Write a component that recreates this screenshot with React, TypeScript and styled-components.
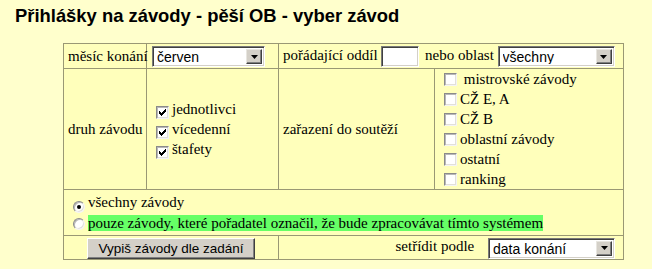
import styled, { createGlobalStyle } from 'styled-components';

const GlobalStyle = createGlobalStyle`
  body {
    margin: 0;
    background: #ffffcc;
  }
`;

const Page = styled.div`
  padding: 5px 0 0 15px;
`;

const Title = styled.h1`
  margin: 0 0 17px;
  font-family: 'Liberation Sans', Arial, sans-serif;
  font-size: 18.4px;
  font-weight: bold;
  line-height: 21px;
  color: #000;
`;

const FormTable = styled.table`
  margin-left: 48px;
  width: 560px;
  table-layout: fixed;
  border-collapse: collapse;
  background: #ffffbb;
`;

const Col = styled.col<{ $w: number }>`
  width: ${(p) => p.$w}px;
`;

const Row = styled.tr<{ $h: number }>`
  height: ${(p) => p.$h}px;
`;

const Cell = styled.td<{ $align?: 'left' | 'center' | 'right'; $pad?: string }>`
  border: 1px solid #9a9874;
  padding: ${(p) => p.$pad || '0 4px'};
  font-family: 'Liberation Serif', 'Times New Roman', serif;
  font-size: 15px;
  line-height: 20px;
  color: #000;
  text-align: ${(p) => p.$align || 'left'};
  vertical-align: middle;
  white-space: nowrap;
`;

const Line = styled.div`
  line-height: 20px;
`;

const Box = styled.span<{ $round?: boolean }>`
  display: inline-flex;
  align-items: center;
  justify-content: center;
  box-sizing: border-box;
  width: ${(p) => (p.$round ? 12 : 13)}px;
  height: ${(p) => (p.$round ? 12 : 13)}px;
  margin: 0 3px 0 5px;
  vertical-align: -2px;
  background: #fff;
  border: 1px solid;
  border-color: #8a8a8a #f4f4f4 #f4f4f4 #8a8a8a;
  border-radius: ${(p) => (p.$round ? '50%' : '0')};
  box-shadow: inset 1px 1px #b8b8b8, inset -1px -1px #e2e0da;
`;

const Dot = styled.span`
  width: 4px;
  height: 4px;
  border-radius: 50%;
  background: #000;
`;

const Marked = styled.span`
  background: #66ff66;
`;

const SelectWrap = styled.span<{ $w: number; $gap: number }>`
  display: inline-flex;
  box-sizing: border-box;
  width: ${(p) => p.$w}px;
  height: 21px;
  margin-left: ${(p) => p.$gap}px;
  vertical-align: middle;
  background: #fff;
  border: 1px solid;
  border-color: #7a7a7a #ffffff #ffffff #7a7a7a;
  box-shadow: inset 1px 1px #404040, inset -1px -1px #d4d0c8;
  padding: 2px;
`;

const Select = styled.select`
  appearance: none;
  flex: 1;
  min-width: 0;
  border: none;
  outline: none;
  background: transparent;
  padding: 0 2px;
  margin: 0;
  font-family: 'Liberation Sans', Arial, sans-serif;
  font-size: 14px;
  color: #000;
`;

const ArrowBtn = styled.span`
  display: flex;
  align-items: center;
  justify-content: center;
  box-sizing: border-box;
  width: 16px;
  background: #d4d0c8;
  border: 1px solid;
  border-color: #e8e6e0 #404040 #404040 #e8e6e0;
  box-shadow: inset -1px -1px #808080;
`;

const TextInput = styled.input`
  box-sizing: border-box;
  width: 38px;
  height: 21px;
  margin: 0 2px 0 0;
  padding: 0 2px;
  vertical-align: middle;
  background: #fff;
  border: 1px solid;
  border-color: #7a7a7a #ffffff #ffffff #7a7a7a;
  box-shadow: inset 1px 1px #404040, inset -1px -1px #d4d0c8;
  font-family: 'Liberation Sans', Arial, sans-serif;
  font-size: 14px;
`;

const Button = styled.button`
  box-sizing: border-box;
  width: 168px;
  height: 21px;
  padding: 0;
  vertical-align: middle;
  background: #d4d0c8;
  border: 1px solid;
  border-color: #ffffff #404040 #404040 #ffffff;
  box-shadow: inset -1px -1px #808080;
  font-family: 'Liberation Sans', Arial, sans-serif;
  font-size: 13.5px;
  color: #000;
`;

const Check = ({ on }: { on?: boolean }) => (
  <Box>
    {on && (
      <svg width="7" height="7" viewBox="0 0 7 7">
        <path
          fill="#000"
          d="M6 0h1v1h-1z M5 1h2v1h-2z M0 2h1v1h-1z M4 2h3v1h-3z M0 3h2v1h-2z M3 3h3v1h-3z M0 4h5v1h-5z M1 5h3v1h-3z M2 6h1v1h-1z"
        />
      </svg>
    )}
  </Box>
);

const Radio = ({ on }: { on?: boolean }) => <Box $round>{on && <Dot />}</Box>;

const Dropdown = ({ w, gap = 4, options }: { w: number; gap?: number; options: string[] }) => (
  <SelectWrap $w={w} $gap={gap}>
    <Select defaultValue={options[0]}>
      {options.map((o) => (
        <option key={o}>{o}</option>
      ))}
    </Select>
    <ArrowBtn>
      <svg width="7" height="4" viewBox="0 0 7 4">
        <path fill="#000" d="M0 0h7L3.5 4z" />
      </svg>
    </ArrowBtn>
  </SelectWrap>
);

const kinds = ['jednotlivci', 'vícedenní', 'štafety'];
const ranks = [' mistrovské závody', 'CŽ E, A', 'CŽ B', 'oblastní závody', 'ostatní', 'ranking'];

export default function App() {
  return (
    <>
      <GlobalStyle />
      <Page>
        <Title>Přihlášky na závody - pěší OB - vyber závod</Title>
        <FormTable>
          <colgroup>
            <Col $w={83} />
            <Col $w={132} />
            <Col $w={156} />
            <Col $w={189} />
          </colgroup>
          <tbody>
            <Row $h={25}>
              <Cell>měsíc konání</Cell>
              <Cell $pad="0 4px 0 1px">
                <Dropdown w={113} options={['červen']} />
              </Cell>
              <Cell colSpan={2}>
                pořádající oddíl <TextInput type="text" /> nebo oblast{' '}
                <Dropdown w={117} gap={0} options={['všechny']} />
              </Cell>
            </Row>
            <Row $h={121}>
              <Cell>druh závodu</Cell>
              <Cell>
                {kinds.map((k) => (
                  <Line key={k}>
                    <Check on />
                    {k}
                  </Line>
                ))}
              </Cell>
              <Cell>zařazení do soutěží</Cell>
              <Cell>
                {ranks.map((r) => (
                  <Line key={r}>
                    <Check />
                    {r}
                  </Line>
                ))}
              </Cell>
            </Row>
            <Row $h={45}>
              <Cell colSpan={4} $pad="2px 4px">
                <Line>
                  <Radio on />
                  všechny závody
                </Line>
                <Line>
                  <Radio />
                  <Marked>pouze závody, které pořadatel označil, že bude zpracovávat tímto systémem</Marked>
                </Line>
              </Cell>
            </Row>
            <Row $h={24}>
              <Cell colSpan={2} $align="center">
                <Button type="button">Vypiš závody dle zadání</Button>
              </Cell>
              <Cell colSpan={2} $align="right" $pad="0 8px 0 4px">
                setřídit podle <Dropdown w={127} gap={10} options={['data konání']} />
              </Cell>
            </Row>
          </tbody>
        </FormTable>
      </Page>
    </>
  );
}
